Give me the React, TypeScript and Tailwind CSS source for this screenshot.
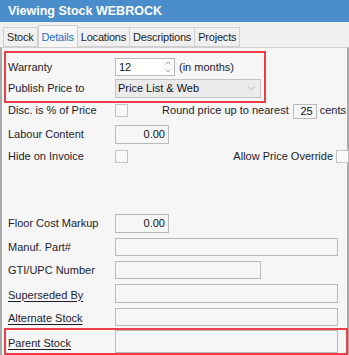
import { ChevronDown, ChevronUp } from "lucide-react";

const tabs = ["Stock", "Details", "Locations", "Descriptions", "Projects"];

const label = "w-[107px] shrink-0 text-[11px] text-[#1c1c2c]";
const input = "h-full border border-[#b9b9b9] bg-[#f6f6f6]";

function Checkbox() {
  return <div className="h-[13px] w-[13px] shrink-0 border border-[#c3c3c3] bg-[#f8f8f8]" />;
}

function LinkLabel({ children }: { children: string }) {
  return <span className="text-[11px] text-[#1c1c2c] underline underline-offset-2">{children}</span>;
}

export default function App() {
  return (
    <div className="flex h-[355px] w-[349px] flex-col overflow-hidden bg-[#f0f0f0] font-['Liberation_Sans',Arial,sans-serif]">
      <div className="flex h-[22px] shrink-0 items-center bg-[#4a8dcb] pl-[8px] text-[12.5px] font-bold text-white">
        Viewing Stock WEBROCK
      </div>

      <div className="flex h-[25px] shrink-0 items-end pl-[3px] pt-[2px]">
        {tabs.map((t) => {
          const active = t === "Details";
          return (
            <div
              key={t}
              className={
                active
                  ? "relative -mb-px flex h-[23px] items-center border border-b-0 border-[#d0d0d0] bg-[#f7f7f7] px-[3px] text-[11px] tracking-[-0.2px] text-[#1b6fc6]"
                  : "flex h-[20px] items-center border border-l-0 border-[#d0d0d0] bg-[#f0f0f0] px-[3px] text-[11px] tracking-[-0.2px] text-[#1c1c2c] first:border-l"
              }
            >
              {t}
            </div>
          );
        })}
      </div>

      <div className="relative flex-1 border-x-2 border-t border-x-[#a9a9a9] border-t-[#d0d0d0] bg-[#f6f6f6] pl-[2px] pr-0">
        {/* highlighted group */}
        <div className="mt-[3px] flex h-[52px] w-[262px] flex-col border-2 border-[#ec3f47] pl-[2px] pt-[5px]">
          <div className="flex h-[18px] items-center">
            <span className={label}>Warranty</span>
            <div className="flex h-full w-[60px] items-center justify-between border border-[#b9b9b9] bg-white pl-[3px] pr-[2px] text-[11px] text-[#111]">
              12
              <div className="flex flex-col text-[#a0a0a0]">
                <ChevronUp size={8} strokeWidth={3} />
                <ChevronDown size={8} strokeWidth={3} />
              </div>
            </div>
            <span className="ml-[4px] text-[11px] text-[#1c1c2c]">(in months)</span>
          </div>
          <div className="mt-[3px] flex h-[19px] items-center">
            <span className={label}>Publish Price to</span>
            <div className="flex h-full w-[146px] items-center justify-between border border-[#c3c3c3] bg-[#ebebeb] pl-[2px] pr-[3px] text-[11px] text-[#111]">
              Price List &amp; Web
              <ChevronDown size={11} className="text-[#a8a8a8]" strokeWidth={2} />
            </div>
          </div>
        </div>

        <div className="mt-[1px] flex h-[15px] items-start pl-[4px]">
          <span className={`${label} w-[103px] leading-[13px]`}>Disc. is % of Price</span>
          <Checkbox />
          <span className="ml-auto mr-[4px] text-[11px] leading-[13px] text-[#1c1c2c]">Round price up to nearest</span>
          <div className="flex h-[15px] w-[24px] items-center justify-end border border-[#b9b9b9] bg-[#f6f6f6] pr-[3px] text-[11px] text-[#111]">
            25
          </div>
          <span className="ml-[3px] mr-[1px] text-[11px] leading-[13px] text-[#1c1c2c]">cents</span>
        </div>

        <div className="mt-[6px] flex h-[19px] items-center pl-[4px]">
          <span className={label}>Labour Content</span>
          <div className={`${input} flex w-[54px] items-center justify-end pr-[3px] text-[11px] text-[#111]`}>0.00</div>
        </div>

        <div className="mt-[6px] flex h-[13px] items-center pl-[4px]">
          <span className={`${label} w-[103px]`}>Hide on Invoice</span>
          <Checkbox />
          <span className="ml-auto mr-[3px] text-[11px] text-[#1c1c2c]">Allow Price Override</span>
          <div className="-mr-[2px]">
            <Checkbox />
          </div>
        </div>

        <div className="mt-[51px] flex h-[19px] items-center pl-[4px]">
          <span className={label}>Floor Cost Markup</span>
          <div className={`${input} flex w-[54px] items-center justify-end pr-[3px] text-[11px] text-[#111]`}>0.00</div>
        </div>

        <div className="mt-[5px] flex h-[18px] items-center pl-[4px]">
          <span className={label}>Manuf. Part#</span>
          <div className={`${input} w-[223px]`} />
        </div>

        <div className="mt-[5px] flex h-[18px] items-center pl-[4px]">
          <span className={label}>GTI/UPC Number</span>
          <div className={`${input} w-[146px]`} />
        </div>

        <div className="mt-[5px] flex h-[19px] items-center pl-[4px]">
          <span className="w-[107px] shrink-0"><LinkLabel>Superseded By</LinkLabel></span>
          <div className={`${input} w-[223px]`} />
        </div>

        <div className="mt-[5px] flex h-[18px] items-center pl-[4px]">
          <span className="w-[107px] shrink-0"><LinkLabel>Alternate Stock</LinkLabel></span>
          <div className={`${input} w-[223px]`} />
        </div>

        <div className="mt-[2px] flex h-[27px] w-[344px] items-center border-2 border-[#ec3f47] pl-[2px]">
          <span className="w-[107px] shrink-0"><LinkLabel>Parent Stock</LinkLabel></span>
          <div className={`${input} h-[18px] w-[223px]`} />
        </div>
      </div>
    </div>
  );
}
